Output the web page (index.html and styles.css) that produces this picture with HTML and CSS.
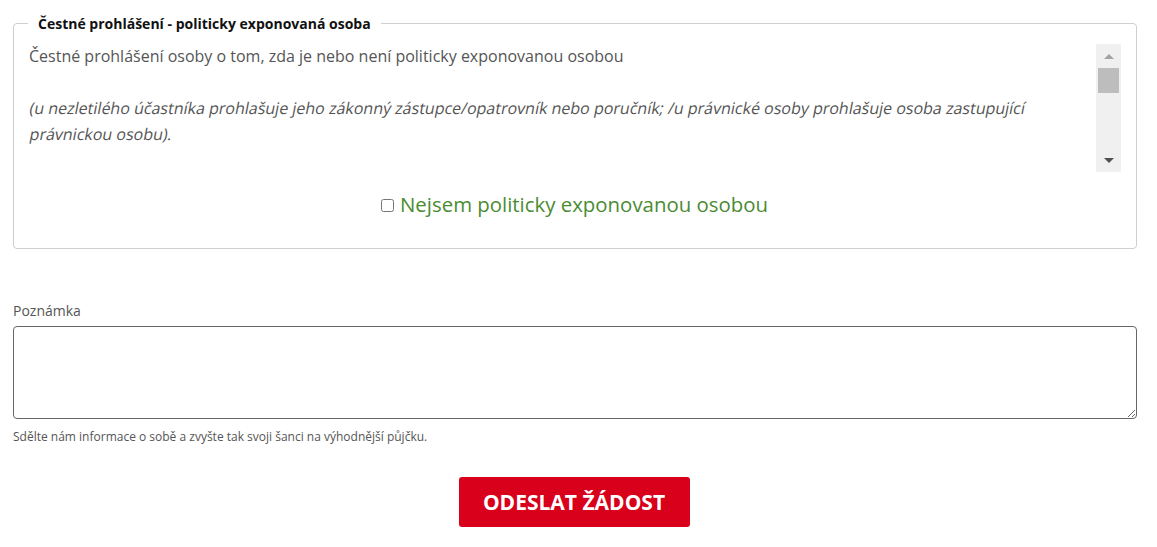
FILE: index.html
```html
<!DOCTYPE html>
<html lang="cs">
<head>
<meta charset="utf-8">
<title>Čestné prohlášení</title>
<link rel="stylesheet" href="styles.css">
</head>
<body>
<main class="page">
  <fieldset class="declaration">
    <legend class="declaration-title">Čestné prohlášení - politicky exponovaná osoba</legend>
    <div class="scrollbox">
      <div class="scroll-content">
        <p class="lead">Čestné prohlášení osoby o tom, zda je nebo není politicky exponovanou osobou</p>
        <p class="note">
          <span class="slant">(u nezletilého účastníka prohlašuje jeho zákonný zástupce/opatrovník nebo poručník; /u právnické osoby prohlašuje osoba zastupující</span>
          <span class="slant">právnickou osobu).</span>
        </p>
      </div>
      <div class="fake-scrollbar" aria-hidden="true">
        <span class="arrow arrow-up"></span>
        <span class="thumb"></span>
        <span class="track-fill"></span>
        <span class="arrow arrow-down"></span>
      </div>
    </div>
    <label class="check-row">
      <input type="checkbox" class="check">
      <span class="check-label">Nejsem politicky exponovanou osobou</span>
    </label>
  </fieldset>

  <div class="field">
    <label class="field-label" for="note">Poznámka</label>
    <textarea id="note" class="field-input"></textarea>
    <div class="field-help">Sdělte nám informace o sobě a zvyšte tak svoji šanci na výhodnější půjčku.</div>
  </div>

  <div class="actions">
    <button type="button" class="submit">ODESLAT ŽÁDOST</button>
  </div>
</main>
</body>
</html>
```

FILE: styles.css
```css
* { box-sizing: border-box; }

html, body {
  margin: 0;
  padding: 0;
  background: #fff;
}

body {
  font-family: "Open Sans", "Liberation Sans", sans-serif;
  color: #555;
}

.page {
  padding: 14px 20px 0 13px;
}

.declaration {
  margin: 0;
  border: 1px solid #cfcfcf;
  border-radius: 4px;
  padding: 10px 15px 30px 14px;
  min-width: 0;
}

.declaration-title {
  font-size: 14px;
  font-weight: 700;
  color: #111;
  padding: 0 10px;
  line-height: 19px;
}

.scrollbox {
  display: flex;
  height: 129px;
}

.scroll-content {
  flex: 1;
  overflow: hidden;
  padding: 0 20px 0 1px;
  font-size: 16px;
  line-height: 26px;
  color: #555;
}

.scroll-content p {
  margin: 0;
}

.lead {
  margin-bottom: 26px !important;
}

.slant {
  display: block;
  white-space: nowrap;
  transform: skewX(-11deg);
  transform-origin: 0 70%;
}

.fake-scrollbar {
  width: 25px;
  margin-top: 1px;
  background: #f0f0f0;
  display: flex;
  flex-direction: column;
  align-items: center;
}

.arrow {
  width: 0;
  height: 0;
  border-left: 5px solid transparent;
  border-right: 5px solid transparent;
}

.arrow-up {
  margin-top: 10px;
  border-bottom: 5px solid #a3a3a3;
}

.arrow-down {
  margin-bottom: 9px;
  border-top: 5px solid #505050;
}

.thumb {
  width: 21px;
  height: 25px;
  margin-top: 9px;
  background: #bdbdbd;
}

.track-fill {
  flex: 1;
}

.check-row {
  display: flex;
  justify-content: center;
  align-items: center;
  gap: 6px;
  margin-top: 18px;
  line-height: 28px;
}

.check {
  margin: 2px 0 0 0;
  width: 13px;
  height: 13px;
}

.check-label {
  font-size: 20.4px;
  color: #4b8b32;
}

.field {
  margin-top: 52px;
}

.field-label {
  display: block;
  font-size: 14px;
  line-height: 19px;
  color: #555;
  margin-bottom: 6px;
}

.field-input {
  display: block;
  width: 100%;
  height: 93px;
  border: 1px solid #666;
  border-radius: 4px;
  font-family: inherit;
  font-size: 14px;
  padding: 6px 10px;
  margin: 0;
  resize: vertical;
}

.field-help {
  margin-top: 10px;
  font-size: 12px;
  line-height: 16px;
  color: #555;
}

.actions {
  display: flex;
  justify-content: center;
  margin-top: 32px;
}

.submit {
  width: 231px;
  height: 50px;
  background: #d8001a;
  color: #fff;
  border: 0;
  border-radius: 3px;
  font-family: "Open Sans", "Liberation Sans", sans-serif;
  font-size: 21px;
  font-weight: 700;
  padding: 0;
  margin-right: 2px;
}
```
